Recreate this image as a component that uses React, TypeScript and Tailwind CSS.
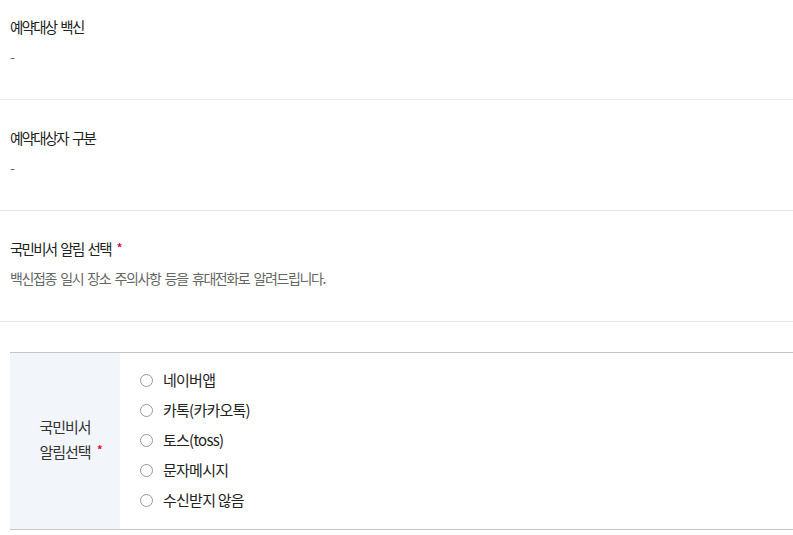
import React from "react";

const font = { fontFamily: '"Noto Sans CJK KR", "Noto Sans", sans-serif' };

function Section({ title, sub, required, first }: { title: string; sub: string; required?: boolean; first?: boolean }) {
  return (
    <div className={`border-b border-[#e6e6ee] px-[10px] pb-[32px] ${first ? "pt-[16px]" : "pt-[27px]"}`}>
      <div className="flex items-center text-[14.5px] leading-[22px] text-[#222] tracking-[-1.75px] [word-spacing:2.5px]">
        <span>{title}</span>
        {required && <span className="relative -top-[2px] ml-[6px] text-[11px] font-bold leading-none text-[#e4002b]">*</span>}
      </div>
      <div className="mt-[7px] text-[14px] leading-[22px] text-[#666] tracking-[-1.4px] [word-spacing:2.5px]">{sub}</div>
    </div>
  );
}

const options = ["네이버앱", "카톡(카카오톡)", "토스(toss)", "문자메시지", "수신받지 않음"];

export default function App() {
  return (
    <div className="w-[793px] h-[535px] bg-white overflow-hidden" style={font}>
      <Section first title="예약대상 백신" sub="-" />
      <Section title="예약대상자 구분" sub="-" />
      <Section title="국민비서 알림 선택" required sub="백신접종 일시 장소 주의사항 등을 휴대전화로 알려드립니다." />
      <div className="ml-[10px] mt-[30px] flex border-t border-b border-[#c4c4cc]">
        <div className="w-[110px] bg-[#f2f6fa] flex items-center justify-center">
          <div className="-mt-[4px] text-center text-[15px] leading-[25px] text-[#333] tracking-[-1px]">
            <div>국민비서</div>
            <div className="relative">
              알림선택
              <span className="absolute -right-[11px] top-[5px] text-[11px] font-bold leading-none text-[#e4002b]">*</span>
            </div>
          </div>
        </div>
        <div className="flex-1 pt-[12px] pb-[14px] pl-[20px]">
          {options.map((o) => (
            <label key={o} className="flex items-center h-[30px] text-[15px] text-[#222] tracking-[-0.75px]">
              <span className="w-[13px] h-[13px] rounded-full border border-[#999] bg-white" />
              <span className="ml-[10px]">{o}</span>
            </label>
          ))}
        </div>
      </div>
    </div>
  );
}
